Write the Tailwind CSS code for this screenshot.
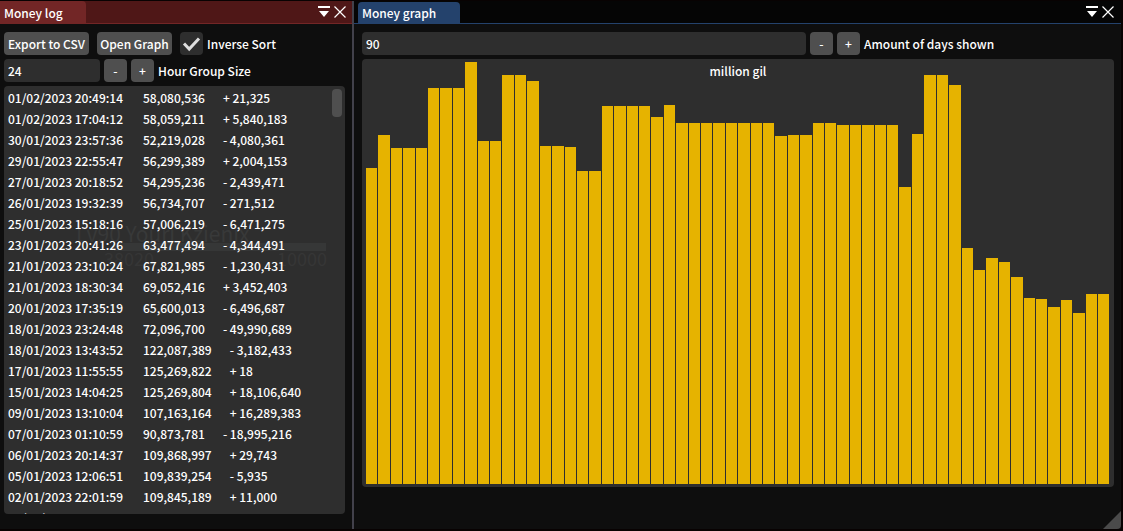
<!DOCTYPE html>
<html lang="en">
<head>
<meta charset="utf-8">
<meta name="viewport" content="width=device-width, initial-scale=1">
<title>Money log</title>
<script src="https://cdn.jsdelivr.net/npm/@tailwindcss/browser@4"></script>
</head>
<body class="flex h-screen overflow-hidden bg-[#080202] py-px pb-0.5 font-['Noto_Sans_CJK_JP',sans-serif] text-[12px] leading-[21px] font-medium text-white">

<section class="flex w-[352px] shrink-0 flex-col bg-[#0e0e0e]" aria-label="Money log">
  <header class="flex h-[23px] shrink-0 items-stretch border-b border-[#722626] bg-[#4f1717]">
    <h1 class="w-[86px] rounded-tr bg-[#722626] px-1 pt-px">Money log</h1>
    <div class="ml-auto flex items-center gap-1 pr-1.5">
      <button aria-label="Collapse" class="size-3"><svg viewBox="0 0 12 12" class="size-3" fill="#fff"><path d="M0 0h12v2H0zM1 5h10L6 11z"/></svg></button>
      <button aria-label="Close" class="size-3"><svg viewBox="0 0 12 12" class="size-3" fill="none" stroke="#fff" stroke-width="1.2"><path d="M.5.5l11 11M11.5.5l-11 11"/></svg></button>
    </div>
  </header>
  <div class="flex min-h-0 grow flex-col gap-1 px-1 pt-2 pb-[15px]">
    <div class="flex h-[23px] shrink-0 items-center gap-2">
      <button class="h-[23px] w-[85px] rounded bg-[#4f4f4f] whitespace-nowrap">Export to CSV</button>
      <button class="h-[23px] w-[75px] rounded bg-[#4f4f4f] whitespace-nowrap">Open Graph</button>
      <label class="flex items-center gap-1">
        <span class="relative size-[23px]">
          <input type="checkbox" checked class="peer block size-[23px] appearance-none rounded bg-[#2e2e2e]">
          <svg viewBox="0 0 23 23" class="pointer-events-none absolute inset-0 hidden size-[23px] peer-checked:block" fill="none" stroke="#dedede" stroke-width="3"><path d="M4 11.5l5.200 5.500L19 6.500"/></svg>
        </span>
        Inverse Sort
      </label>
    </div>
    <div class="flex h-[23px] shrink-0 items-center gap-1">
      <input id="group" type="text" value="24" class="h-[23px] w-24 rounded bg-[#2e2e2e] px-1">
      <button aria-label="Decrease" class="size-[23px] rounded bg-[#4f4f4f]">-</button>
      <button aria-label="Increase" class="size-[23px] rounded bg-[#4f4f4f]">+</button>
      <label for="group">Hour Group Size</label>
    </div>
    <div class="relative mr-[3px] min-h-0 grow overflow-hidden rounded bg-[#2e2e2e]">
      <!-- Game scene showing faintly through the panel -->
      <div aria-hidden="true" class="absolute top-[157px] left-[110px] h-2 w-[212px] bg-[#363737]"></div>
      <div aria-hidden="true" class="absolute top-[132px] left-[72px] text-[21px] leading-[30px] font-normal whitespace-nowrap text-[#383939]">Lv90 Youri Kzienix</div>
      <div aria-hidden="true" class="absolute top-[162px] left-[100px] flex w-[223px] justify-between text-[18px] font-normal text-[#363636]"><span>38020</span><span>10000</span></div>
      <div class="absolute top-[3px] right-[3px] h-7 w-2.5 rounded bg-[#4f4f4f]"></div>
      <ul id="log" class="relative px-1 pt-px"></ul>
    </div>
  </div>
</section>

<div class="w-0.5 shrink-0 bg-[#42414b]"></div>

<section class="relative mr-[2px] flex min-w-0 grow flex-col bg-[#0e0e0e]" aria-label="Money graph">
  <header class="flex h-[23px] shrink-0 items-stretch border-b border-[#24426c] bg-[#050505] pl-1">
    <h1 class="mt-px w-[102px] rounded-t bg-[#24426c] px-1">Money graph</h1>
    <div class="ml-auto flex items-center gap-1 pr-[7px]">
      <button aria-label="Collapse" class="size-3"><svg viewBox="0 0 12 12" class="size-3" fill="#fff"><path d="M0 0h12v2H0zM1 5h10L6 11z"/></svg></button>
      <button aria-label="Close" class="size-3"><svg viewBox="0 0 12 12" class="size-3" fill="none" stroke="#fff" stroke-width="1.2"><path d="M.5.5l11 11M11.5.5l-11 11"/></svg></button>
    </div>
  </header>
  <div class="flex min-h-0 grow flex-col gap-1 pt-2 pr-[7px] pb-[42px] pl-2">
    <div class="flex h-[23px] shrink-0 items-center gap-1">
      <input id="days" type="text" value="90" class="h-[23px] min-w-0 grow rounded bg-[#2e2e2e] px-1">
      <button aria-label="Decrease" class="size-[23px] rounded bg-[#4f4f4f]">-</button>
      <button aria-label="Increase" class="size-[23px] rounded bg-[#4f4f4f]">+</button>
      <label for="days" class="w-[250px]">Amount of days shown</label>
    </div>
    <div class="relative min-h-0 grow rounded bg-[#2e2e2e] px-1 py-[3px]">
      <div id="bars" class="flex h-full items-end"></div>
      <div class="absolute inset-x-0 top-px text-center">million gil</div>
    </div>
  </div>
  <svg aria-hidden="true" viewBox="0 0 18 18" class="absolute right-0 bottom-0 size-[18px]" fill="#4a4a4a"><path d="M18 0v14q0 4-4 4H0z"/></svg>
</section>

<script>
const entries = [
  ["01/02/2023 20:49:14","58,080,536","+ 21,325"],
  ["01/02/2023 17:04:12","58,059,211","+ 5,840,183"],
  ["30/01/2023 23:57:36","52,219,028","- 4,080,361"],
  ["29/01/2023 22:55:47","56,299,389","+ 2,004,153"],
  ["27/01/2023 20:18:52","54,295,236","- 2,439,471"],
  ["26/01/2023 19:32:39","56,734,707","- 271,512"],
  ["25/01/2023 15:18:16","57,006,219","- 6,471,275"],
  ["23/01/2023 20:41:26","63,477,494","- 4,344,491"],
  ["21/01/2023 23:10:24","67,821,985","- 1,230,431"],
  ["21/01/2023 18:30:34","69,052,416","+ 3,452,403"],
  ["20/01/2023 17:35:19","65,600,013","- 6,496,687"],
  ["18/01/2023 23:24:48","72,096,700","- 49,990,689"],
  ["18/01/2023 13:43:52","122,087,389","- 3,182,433"],
  ["17/01/2023 11:55:55","125,269,822","+ 18"],
  ["15/01/2023 14:04:25","125,269,804","+ 18,106,640"],
  ["09/01/2023 13:10:04","107,163,164","+ 16,289,383"],
  ["07/01/2023 01:10:59","90,873,781","- 18,995,216"],
  ["06/01/2023 20:14:37","109,868,997","+ 29,743"],
  ["05/01/2023 12:06:51","109,839,254","- 5,935"],
  ["02/01/2023 22:01:59","109,845,189","+ 11,000"],
  ["01/01/2023"]
];
document.getElementById("log").innerHTML = entries.map(([date, ...rest]) =>
  `<li class="flex gap-[18px] whitespace-nowrap"><span class="w-[117px]">${date}</span>${rest.map(t => `<span>${t}</span>`).join("")}</li>`).join("");

const values = [316,349,336,336,336,396,396,396,422,343,343,409,409,403,338,338,337,313,313,
  378,378,378,378,367,379,361,361,361,361,361,361,361,361,348,349,349,361,361,359,359,359,359,359,
  297,350,409,409,399,236,214,226,222,207,186,185,177,184,171,190,190];
document.getElementById("bars").innerHTML = values.map(v =>
  `<div class="grow basis-0 border-r border-[#2e2e2e] bg-[#e6b300]" style="height:${v / 4.22}%"></div>`).join("");
</script>
</body>
</html>
